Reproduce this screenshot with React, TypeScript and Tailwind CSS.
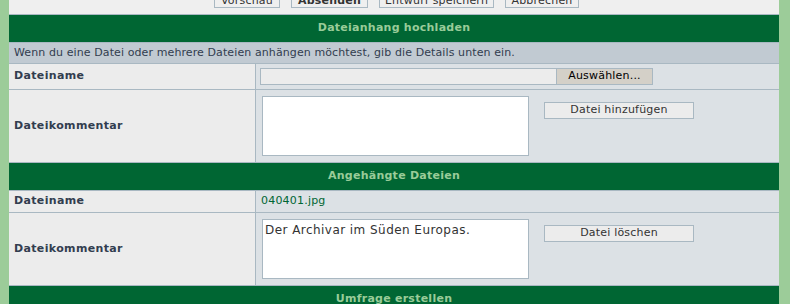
import React from "react";

const font = { fontFamily: '"DejaVu Sans", Verdana, sans-serif' };

function Header({ children }: { children: React.ReactNode }) {
  return (
    <div className="h-[28px] shrink-0 bg-[#006633] flex items-center justify-center text-[11px] font-bold tracking-[0.25px] text-[#99cc99] border-b border-[#a9b8c2]">
      {children}
    </div>
  );
}

function Row({ label, height, children }: { label: string; height: string; children: React.ReactNode }) {
  return (
    <div className={`flex shrink-0 border-b border-[#a9b8c2] ${height}`}>
      <div className="w-[247px] shrink-0 bg-[#ececec] border-r border-[#a9b8c2] flex items-center pl-[5px] text-[11px] font-bold tracking-[0.35px] text-[#323d4f]">
        {label}
      </div>
      <div className="flex-1 bg-[#dce1e5] pl-[4px]">{children}</div>
    </div>
  );
}

const topBtn =
  "mt-[-11px] h-[19px] shrink-0 border border-[#a9b8c2] bg-[#efefef] text-[11px] leading-[13px] tracking-[0.2px] text-[#333] flex items-end justify-center";

export default function App() {
  return (
    <div className="w-[790px] h-[304px] overflow-hidden flex bg-[#9ccc99]" style={font}>
      <div className="w-[9px] shrink-0 bg-[#9ccc99]" />
      <div className="w-[770px] shrink-0 flex flex-col bg-[#efefef]">
        <div className="h-[15px] shrink-0 overflow-hidden border-b border-[#a9b8c2] bg-[#efefef] flex justify-center gap-[11px] pl-[5px]">
          <div className={`${topBtn} w-[66px]`}>Vorschau</div>
          <div className={`${topBtn} w-[77px] font-bold`}>Absenden</div>
          <div className={`${topBtn} w-[115px]`}>Entwurf speichern</div>
          <div className={`${topBtn} w-[74px]`}>Abbrechen</div>
        </div>
        <Header>Dateianhang hochladen</Header>
        <div className="h-[21px] shrink-0 bg-[#c1cad2] border-b border-[#a9b8c2] flex items-center pl-[5px] text-[11px] tracking-[0.1px] text-[#323d4f]">
          Wenn du eine Datei oder mehrere Dateien anhängen möchtest, gib die Details unten ein.
        </div>
        <Row label="Dateiname" height="h-[26px]">
          <div className="flex mt-[4px] h-[17px]">
            <div className="w-[297px] bg-[#ececec] border border-[#a9b8c2]" />
            <div className="w-[96px] bg-[#d4d0c8] border border-[#a9b8c2] border-l-0 flex items-center justify-center text-[11px] tracking-[0.2px] text-black">
              Auswählen...
            </div>
          </div>
        </Row>
        <Row label="Dateikommentar" height="h-[73px]">
          <div className="flex items-start pt-[6px] pl-[2px]">
            <div className="w-[267px] h-[60px] bg-white border border-[#a9b8c2]" />
            <div className="ml-[15px] mt-[6px] w-[150px] h-[17px] bg-[#ececec] border border-[#a9b8c2] flex items-center justify-center text-[11px] tracking-[0.2px] text-[#333]">
              Datei hinzufügen
            </div>
          </div>
        </Row>
        <Header>Angehängte Dateien</Header>
        <Row label="Dateiname" height="h-[22px]">
          <div className="h-full flex items-center pl-[1px] text-[11px] tracking-[0.2px] text-[#006633]">040401.jpg</div>
        </Row>
        <Row label="Dateikommentar" height="h-[73px]">
          <div className="flex items-start pt-[6px] pl-[2px]">
            <div className="w-[267px] h-[60px] bg-white border border-[#a9b8c2] px-[2px] pt-[2px] text-[12px] tracking-[0.45px] text-[#333] leading-[16px]">
              Der Archivar im Süden Europas.
            </div>
            <div className="ml-[15px] mt-[6px] w-[150px] h-[17px] bg-[#ececec] border border-[#a9b8c2] flex items-center justify-center text-[11px] tracking-[0.2px] text-[#333]">
              Datei löschen
            </div>
          </div>
        </Row>
        <Header>Umfrage erstellen</Header>
      </div>
      <div className="flex-1 bg-[#9ccc99]" />
    </div>
  );
}
